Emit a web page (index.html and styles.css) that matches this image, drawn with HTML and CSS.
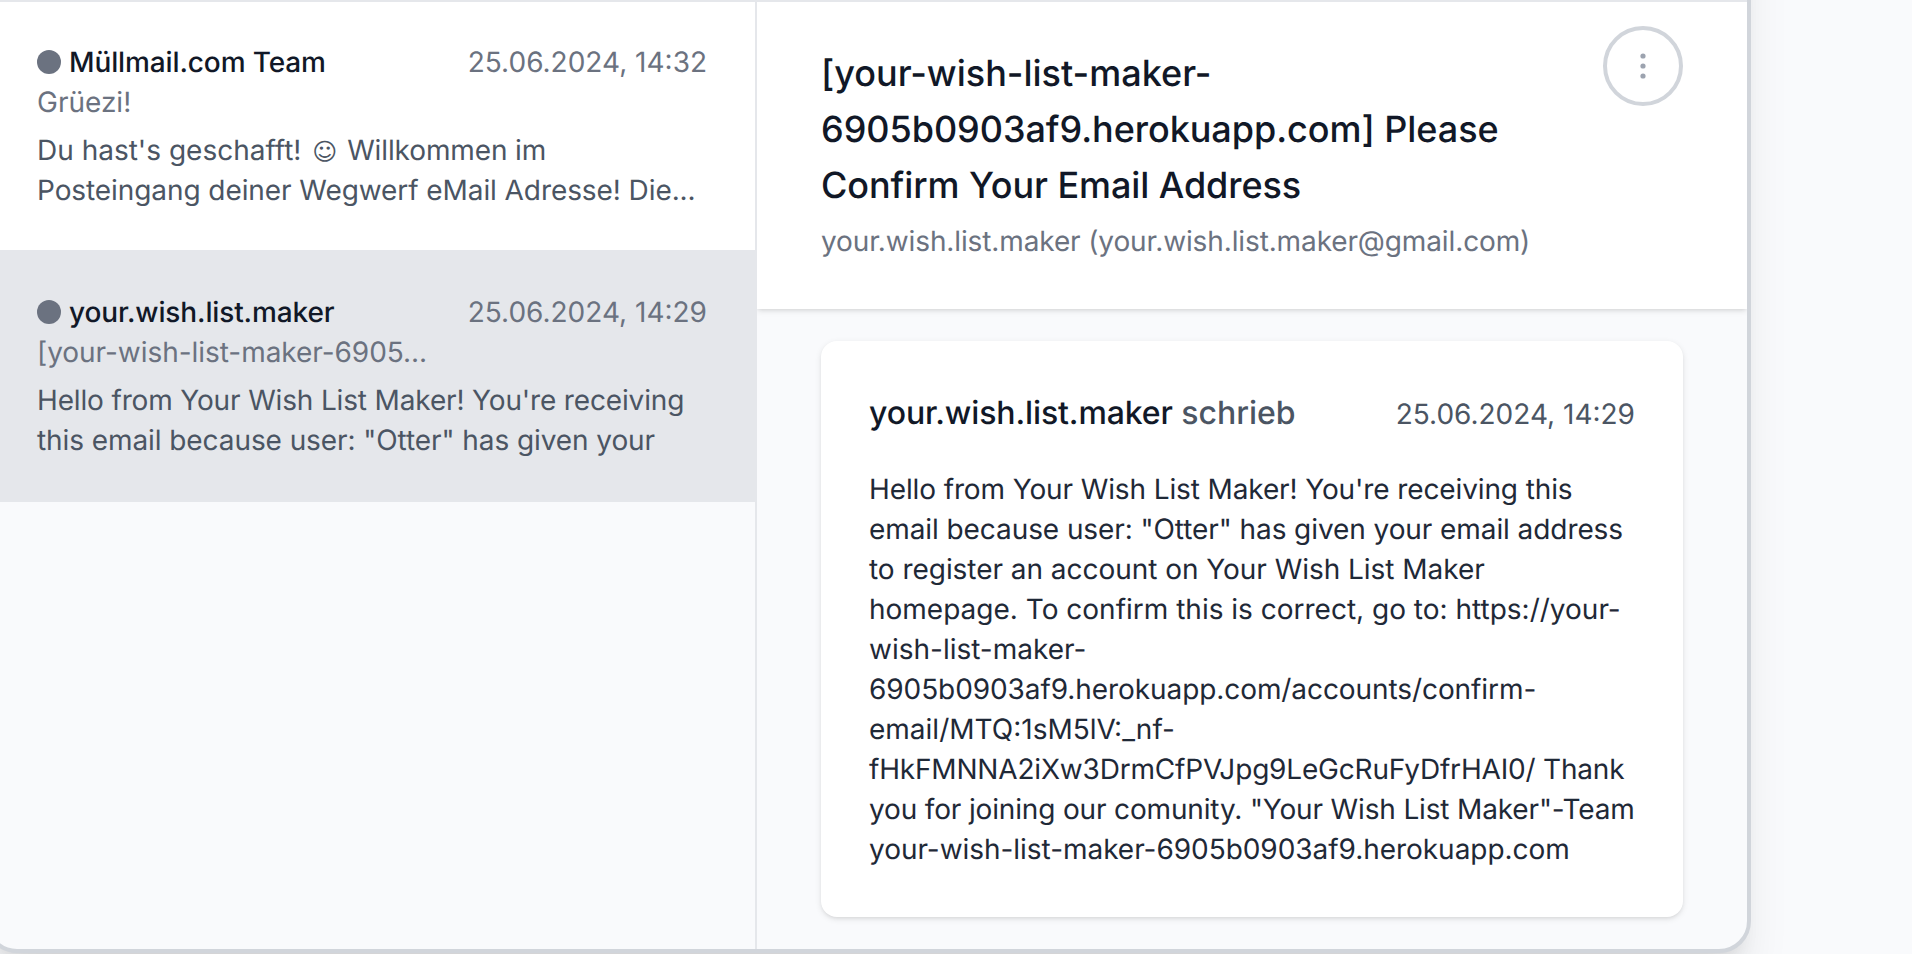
FILE: index.html
```html
<!DOCTYPE html>
<html lang="de">
<head>
<meta charset="utf-8">
<title>Müllmail.com</title>
<link rel="stylesheet" href="styles.css">
</head>
<body>
<main class="mailbox">
  <aside class="list">
    <article class="item">
      <div class="item-head">
        <h2 class="sender snug-3"><span class="dot"></span>Müllmail.com Team</h2>
        <time class="date">25.06.2024, 14:32</time>
      </div>
      <p class="subject">Grüezi!</p>
      <p class="preview">Du hast's geschafft! <span class="smiley">☺</span> <span class="snug-3">Willkommen im</span><br><span class="snug-2">Posteingang deiner Wegwerf eMail Adresse! Die...</span></p>
    </article>
    <article class="item selected">
      <div class="item-head">
        <h2 class="sender snug-3"><span class="dot"></span>your.wish.list.maker</h2>
        <time class="date">25.06.2024, 14:29</time>
      </div>
      <p class="subject snug-1">[your-wish-list-maker-6905...</p>
      <p class="preview"><span class="snug-4">Hello from Your Wish List Maker! You're receiving</span><br><span class="snug-2">this email because user: "Otter" has given your</span></p>
    </article>
  </aside>
  <section class="reader">
    <header class="reader-head">
      <div class="heading">
        <h1 class="title">[your-wish-list-maker-<br><span class="snug-1">6905b0903af9.herokuapp.com] Please</span><br><span class="snug-2">Confirm Your Email Address</span></h1>
        <p class="from snug-3">your.wish.list.maker (your.wish.list.maker@gmail.com)</p>
      </div>
      <button class="more" aria-label="Optionen">
        <svg width="40" height="40" viewBox="0 0 40 40" fill="#9ca3af">
          <circle cx="20" cy="10" r="2.6"/><circle cx="20" cy="20" r="2.6"/><circle cx="20" cy="30" r="2.6"/>
        </svg>
      </button>
    </header>
    <article class="card">
      <div class="card-head">
        <h3 class="author"><span class="snug-3">your.wish.list.maker</span> <span class="wrote">schrieb</span></h3>
        <time class="date card-date">25.06.2024, 14:29</time>
      </div>
      <p class="body"><span class="snug-3">Hello from Your Wish List Maker! You're receiving this</span><br><span class="snug-2">email because user: "Otter" has given your email address</span><br><span class="snug-1">to register an account on Your Wish List Maker</span><br>homepage. To confirm this is correct, go to: https://your-<br>wish-list-maker-<br><span class="snug-2">6905b0903af9.herokuapp.com/accounts/confirm-</span><br>email/MTQ:1sM5lV:_nf-<br><span class="snug-5">fHkFMNNA2iXw3DrmCfPVJpg9LeGcRuFyDfrHAI0/ Thank</span><br><span class="snug-4">you for joining our comunity. "Your Wish List Maker"-Team</span><br><span class="snug-1">your-wish-list-maker-6905b0903af9.herokuapp.com</span></p>
    </article>
  </section>
</main>
</body>
</html>
```
FILE: styles.css
```css
* { box-sizing: border-box; }
html, body { height: 100%; }
body {
  margin: 0;
  overflow: hidden;
  background: #f9fafc;
  font-family: Inter, sans-serif;
  font-size: 28px;
  line-height: 40px;
  color: #111827;
  text-rendering: geometricPrecision;
}
h1, h2, h3, p { margin: 0; font-weight: 400; white-space: nowrap; }

/* Letter spacing steps */
.snug-1 { letter-spacing: -.04px; }
.snug-2 { letter-spacing: -.08px; }
.snug-3 { letter-spacing: -.12px; }
.snug-4 { letter-spacing: -.155px; }
.snug-5 { letter-spacing: -.185px; }

.mailbox {
  display: flex;
  width: 1766px;
  height: 1057px;
  margin: -104px 0 0 -15px;
  padding-top: 100px;
  overflow: hidden;
  background: #f9fafc;
  border: 4px solid #d1d5db;
  border-radius: 32px;
  box-shadow: 0 40px 50px -10px rgba(0,0,0,.1), 0 16px 20px -12px rgba(0,0,0,.1);
}
.list {
  flex: none;
  width: 768px;
  border-top: 2px solid #e5e7eb;
  border-right: 2px solid #e5e7eb;
}
.item {
  padding: 40px 48px;
  background: #fff;
  border-bottom: 2px solid #e5e7eb;
}
.selected { background: #e5e7eb; }
.item-head, .card-head { display: flex; justify-content: space-between; align-items: center; }
.sender { display: flex; align-items: center; gap: 8px; font-size: 28px; font-weight: 500; }
.dot { width: 24px; height: 24px; border-radius: 50%; background: #6b7280; }
.date, .subject { color: #6b7280; white-space: nowrap; }
.preview { margin-top: 8px; color: #4b5563; }
.smiley { padding: 0 2px 0 3px; font-family: "DejaVu Sans", sans-serif; font-size: 24px; line-height: 1; }
.reader { flex: 1; border-top: 2px solid #e5e7eb; overflow: hidden; }
.reader-head {
  display: flex;
  justify-content: space-between;
  align-items: flex-start;
  padding: 24px 64px 48px;
  background: #fff;
  box-shadow: 0 2px 6px rgba(0,0,0,.1), 0 2px 4px -2px rgba(0,0,0,.1);
}
.heading { padding-top: 19px; }
.title { font-size: 36px; line-height: 56px; font-weight: 500; }
.from { margin-top: 8px; color: #6b7280; }
.more {
  display: grid;
  place-items: center;
  width: 80px;
  height: 80px;
  padding: 0;
  background: #fff;
  border: 4px solid #d1d5db;
  border-radius: 50%;
}
.card {
  margin: 32px 64px;
  padding: 48px;
  background: #fff;
  border-radius: 16px;
  box-shadow: 0 2px 6px rgba(0,0,0,.1), 0 2px 4px -2px rgba(0,0,0,.1);
}
.card-head { align-items: baseline; }
.author { font-size: 32px; line-height: 48px; font-weight: 500; }
.wrote { color: #4b5563; }
.card-date { color: #4b5563; }
.body { margin-top: 32px; color: #1f2937; }
```
